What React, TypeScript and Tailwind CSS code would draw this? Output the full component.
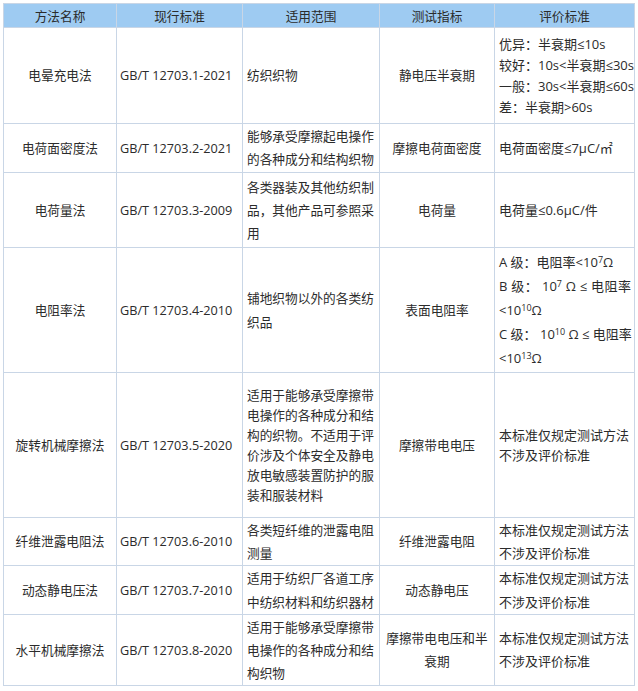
type Row = {
  h: string;
  lh: string;
  name: string;
  std: string;
  scope: string[];
  metric: string[];
  criteria: React.ReactNode[];
};

const keep = ["本标准仅规定测试方法", "不涉及评价标准"];

const sup = "text-[9px] leading-none";

const rows: Row[] = [
  {
    h: "h-[96px]",
    lh: "leading-[21px]",
    name: "电晕充电法",
    std: "GB/T 12703.1-2021",
    scope: ["纺织织物"],
    metric: ["静电压半衰期"],
    criteria: ["优异：半衰期≤10s", "较好：10s<半衰期≤30s", "一般：30s<半衰期≤60s", "差：半衰期>60s"],
  },
  {
    h: "h-[49px]",
    lh: "leading-[23px]",
    name: "电荷面密度法",
    std: "GB/T 12703.2-2021",
    scope: ["能够承受摩擦起电操作", "的各种成分和结构织物"],
    metric: ["摩擦电荷面密度"],
    criteria: ["电荷面密度≤7μC/㎡"],
  },
  {
    h: "h-[75px]",
    lh: "leading-[23px]",
    name: "电荷量法",
    std: "GB/T 12703.3-2009",
    scope: ["各类器装及其他纺织制", "品，其他产品可参照采", "用"],
    metric: ["电荷量"],
    criteria: ["电荷量≤0.6μC/件"],
  },
  {
    h: "h-[125px]",
    lh: "leading-[24px]",
    name: "电阻率法",
    std: "GB/T 12703.4-2010",
    scope: ["铺地织物以外的各类纺", "织品"],
    metric: ["表面电阻率"],
    criteria: [
      <>A 级：电阻率&lt;10<sup className={sup}>7</sup>Ω</>,
      <span className="block [text-align-last:justify]">B 级： 10<sup className={sup}>7</sup> Ω ≤ 电阻率</span>,
      <>&lt;10<sup className={sup}>10</sup>Ω</>,
      <span className="block [text-align-last:justify]">C 级： 10<sup className={sup}>10</sup> Ω ≤ 电阻率</span>,
      <>&lt;10<sup className={sup}>13</sup>Ω</>,
    ],
  },
  {
    h: "h-[145px]",
    lh: "leading-[20px]",
    name: "旋转机械摩擦法",
    std: "GB/T 12703.5-2020",
    scope: ["适用于能够承受摩擦带", "电操作的各种成分和结", "构的织物。不适用于评", "价涉及个体安全及静电", "放电敏感装置防护的服", "装和服装材料"],
    metric: ["摩擦带电电压"],
    criteria: keep,
  },
  {
    h: "h-[48px]",
    lh: "leading-[23px]",
    name: "纤维泄露电阻法",
    std: "GB/T 12703.6-2010",
    scope: ["各类短纤维的泄露电阻", "测量"],
    metric: ["纤维泄露电阻"],
    criteria: keep,
  },
  {
    h: "h-[49px]",
    lh: "leading-[24px]",
    name: "动态静电压法",
    std: "GB/T 12703.7-2010",
    scope: ["适用于纺织厂各道工序", "中纺织材料和纺织器材"],
    metric: ["动态静电压"],
    criteria: keep,
  },
  {
    h: "h-[71px]",
    lh: "leading-[23px]",
    name: "水平机械摩擦法",
    std: "GB/T 12703.8-2020",
    scope: ["适用于能够承受摩擦带", "电操作的各种成分和结", "构织物"],
    metric: ["摩擦带电电压和半", "衰期"],
    criteria: keep,
  },
];

const cell = "border border-[#c9d6e6] align-middle p-0";

export default function App() {
  return (
    <div className="bg-white w-[638px] h-[691px] pt-[3px] pl-[3px] font-['Open_Sans','Noto_Sans_CJK_SC',sans-serif] text-[#2b2b2b] text-[12.7px]">
      <table className="table-fixed border-collapse w-[631px]">
        <colgroup>
          <col className="w-[113px]" />
          <col className="w-[126px]" />
          <col className="w-[137px]" />
          <col className="w-[115px]" />
          <col className="w-[140px]" />
        </colgroup>
        <thead>
          <tr className="h-[24px] bg-[#9ecbf2]">
            {["方法名称", "现行标准", "适用范围", "测试指标", "评价标准"].map((t) => (
              <th key={t} className={`${cell} font-normal text-center leading-[20px]`}>
                {t}
              </th>
            ))}
          </tr>
        </thead>
        <tbody>
          {rows.map((r) => (
            <tr key={r.name} className={`${r.h} ${r.lh}`}>
              <td className={`${cell} text-center`}>{r.name}</td>
              <td className={`${cell} pl-[3px]`}>{r.std}</td>
              <td className={`${cell} pl-[4px] pr-[2px] whitespace-nowrap`}>
                {r.scope.map((s, i) => (
                  <div key={i}>{s}</div>
                ))}
              </td>
              <td className={`${cell} text-center`}>
                {r.metric.map((s, i) => (
                  <div key={i}>{s}</div>
                ))}
              </td>
              <td className={`${cell} pl-[4px] pr-[3px] text-[13px] whitespace-nowrap`}>
                {r.criteria.map((s, i) => (
                  <div key={i}>{s}</div>
                ))}
              </td>
            </tr>
          ))}
        </tbody>
      </table>
    </div>
  );
}
